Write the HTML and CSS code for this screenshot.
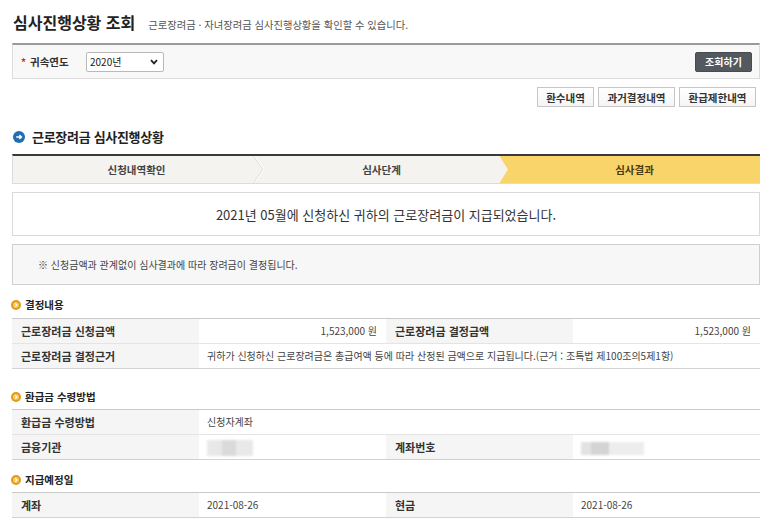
FILE: index.html
```html
<!DOCTYPE html>
<html lang="ko">
<head>
<meta charset="utf-8">
<title>심사진행상황 조회</title>
<link rel="stylesheet" href="styles.css">
</head>
<body>
<div class="page">
  <div class="page-head">
    <h1 class="page-title">심사진행상황 조회</h1>
    <p class="page-desc">근로장려금 · 자녀장려금 심사진행상황을 확인할 수 있습니다.</p>
  </div>

  <div class="search-box">
    <div class="search-field">
      <span class="req">*</span>
      <span class="search-label">귀속연도</span>
      <div class="select">
        <span>2020년</span>
        <svg class="select-arrow" width="8" height="6" viewBox="0 0 8 6"><path d="M1 1.2 L4 4.4 L7 1.2" fill="none" stroke="#222" stroke-width="1.8"/></svg>
      </div>
    </div>
    <button class="btn-dark">조회하기</button>
  </div>

  <div class="btn-row">
    <button class="btn btn-s">환수내역</button>
    <button class="btn btn-l">과거결정내역</button>
    <button class="btn btn-l">환급제한내역</button>
  </div>

  <h2 class="sec-title">
    <svg class="sec-icon" width="12" height="12" viewBox="0 0 12 12"><circle cx="6" cy="6" r="6" fill="#1f6db3"/><path d="M3.2 6 H8.4 M6.4 4 L8.5 6 L6.4 8" fill="none" stroke="#fff" stroke-width="1.4"/></svg>
    근로장려금 심사진행상황
  </h2>

  <div class="steps">
    <div class="step step-1">신청내역확인
      <svg class="chev chev-1" width="11" height="27" viewBox="0 0 11 27"><polyline points="0.5,0 10,13.5 0.5,27" fill="none" stroke="#d9d7d0" stroke-width="1"/><polyline points="1.6,0 11,13.5 1.6,27" fill="none" stroke="#fdfcfa" stroke-width="1.2"/></svg>
    </div>
    <div class="step step-2">심사단계
      <svg class="chev chev-2" width="10" height="27" viewBox="0 0 10 27"><polygon points="0,0 8.5,13.5 0,27" fill="#f4f3ef"/><polyline points="0,0 8.5,13.5 0,27" fill="none" stroke="#f7f2df" stroke-width="1"/></svg>
    </div>
    <div class="step step-3">심사결과</div>
  </div>

  <div class="msg-box">2021년 05월에 신청하신 귀하의 근로장려금이 지급되었습니다.</div>

  <div class="note-box">※ 신청금액과 관계없이 심사결과에 따라 장려금이 결정됩니다.</div>

  <h3 class="sub-title sub-first">
    <svg class="sub-icon" width="10" height="10" viewBox="0 0 10 10"><circle cx="5" cy="5" r="5" fill="#e39a1c"/><circle cx="5" cy="5" r="3" fill="#f6c95a"/><path d="M4.2 3.4 L5.9 5 L4.2 6.6" fill="none" stroke="#fff" stroke-width="1.1"/></svg>
    결정내용
  </h3>
  <table class="info">
    <colgroup><col class="c-th"><col class="c-td"><col class="c-th"><col class="c-td"></colgroup>
    <tr>
      <th>근로장려금 신청금액</th>
      <td class="num">1,523,000 원</td>
      <th>근로장려금 결정금액</th>
      <td class="num">1,523,000 원</td>
    </tr>
    <tr class="last">
      <th>근로장려금 결정근거</th>
      <td colspan="3">귀하가 신청하신 근로장려금은 총급여액 등에 따라 산정된 금액으로 지급됩니다.(근거 : 조특법 제100조의5제1항)</td>
    </tr>
  </table>

  <h3 class="sub-title sub-second">
    <svg class="sub-icon" width="10" height="10" viewBox="0 0 10 10"><circle cx="5" cy="5" r="5" fill="#e39a1c"/><circle cx="5" cy="5" r="3" fill="#f6c95a"/><path d="M4.2 3.4 L5.9 5 L4.2 6.6" fill="none" stroke="#fff" stroke-width="1.1"/></svg>
    환급금 수령방법
  </h3>
  <table class="info">
    <colgroup><col class="c-th"><col class="c-td"><col class="c-th"><col class="c-td"></colgroup>
    <tr>
      <th>환급금 수령방법</th>
      <td colspan="3">신청자계좌</td>
    </tr>
    <tr class="last">
      <th>금융기관</th>
      <td><span class="blur blur-bank"></span></td>
      <th>계좌번호</th>
      <td><span class="blur blur-acct"></span></td>
    </tr>
  </table>

  <h3 class="sub-title sub-third">
    <svg class="sub-icon" width="10" height="10" viewBox="0 0 10 10"><circle cx="5" cy="5" r="5" fill="#e39a1c"/><circle cx="5" cy="5" r="3" fill="#f6c95a"/><path d="M4.2 3.4 L5.9 5 L4.2 6.6" fill="none" stroke="#fff" stroke-width="1.1"/></svg>
    지급예정일
  </h3>
  <table class="info">
    <colgroup><col class="c-th"><col class="c-td"><col class="c-th"><col class="c-td"></colgroup>
    <tr class="last">
      <th>계좌</th>
      <td>2021-08-26</td>
      <th>현금</th>
      <td>2021-08-26</td>
    </tr>
  </table>
</div>
</body>
</html>
```

FILE: styles.css
```css
* { box-sizing: border-box; }
html, body { margin: 0; padding: 0; background: #fff; }
body {
  font-family: "Noto Sans CJK KR", "Noto Sans", sans-serif;
  color: #333;
  font-size: 10px;
}
h1, h2, h3, p { margin: 0; }
button { font-family: inherit; cursor: pointer; }

.page {
  width: 748px;
  margin-left: 12px;
  padding-top: 12px;
}

/* header */
.page-head {
  display: flex;
  align-items: baseline;
  gap: 13px;
  height: 20px;
  line-height: 20px;
}
.page-title {
  font-size: 16px;
  font-weight: bold;
  color: #222;
  padding-left: 1px;
}
.page-desc {
  font-size: 10.3px;
  color: #555;
}

/* search box */
.search-box {
  margin-top: 11px;
  height: 36px;
  background: #f8f8f8;
  border: 1px solid #dcdcdc;
  border-top: 2px solid #9a9a9a;
  display: flex;
  align-items: center;
  justify-content: space-between;
  padding: 0 7px 0 8px;
}
.search-field {
  display: flex;
  align-items: center;
}
.req {
  color: #c0392b;
  font-weight: bold;
  font-size: 10px;
  width: 9px;
}
.search-label {
  font-size: 10.5px;
  font-weight: bold;
  color: #333;
  width: 56px;
}
.select {
  width: 78px;
  height: 20px;
  background: #fff;
  border: 1px solid #b9b9b9;
  border-radius: 2px;
  display: flex;
  align-items: center;
  justify-content: space-between;
  padding: 0 5px 0 3px;
  font-size: 10px;
  color: #222;
}
.btn-dark {
  width: 57px;
  height: 20px;
  background: #53595e;
  color: #fff;
  border: 1px solid #474c50;
  border-radius: 2px;
  font-size: 10px;
  font-weight: bold;
  padding: 0;
}

/* buttons row */
.btn-row {
  margin-top: 8px;
  display: flex;
  justify-content: flex-end;
  gap: 4px;
  padding-right: 4px;
}
.btn {
  height: 20px;
  padding: 0;
  background: linear-gradient(#ffffff, #f5f5f5);
  border: 1px solid #c6c6c6;
  font-size: 10.5px;
  font-weight: bold;
  color: #333;
}
.btn-s { width: 57px; }
.btn-l { width: 77px; }

/* section title */
.sec-title {
  margin-top: 22px;
  height: 16px;
  line-height: 16px;
  font-size: 13px;
  font-weight: bold;
  color: #222;
  display: flex;
  align-items: center;
  gap: 7px;
  letter-spacing: -0.3px;
}
.sec-icon { margin-left: 1px; flex: none; }

/* steps */
.steps {
  margin-top: 9px;
  height: 30px;
  display: flex;
  background: #f4f3ef;
  border-top: 2px solid #3a3a3a;
  border-bottom: 1px solid #dcdcdc;
  border-left: 1px solid #dcdcdc;
}
.step {
  position: relative;
  display: flex;
  align-items: center;
  justify-content: center;
  font-size: 10.5px;
  font-weight: bold;
  color: #444;
}
.step-1 { width: 247px; }
.step-2 { width: 240px; padding-left: 3px; }
.step-3 {
  width: 260px;
  padding-left: 9px;
  background: #f9d46b;
  color: #4a3d10;
}
.chev { position: absolute; top: 0; z-index: 1; }
.chev-1 { right: -4px; }
.chev-2 { right: -9px; }

/* message boxes */
.msg-box {
  margin-top: 8px;
  height: 44px;
  border: 1px solid #d9d9d9;
  display: flex;
  align-items: center;
  justify-content: center;
  font-size: 13px;
  color: #333;
}
.note-box {
  margin-top: 8px;
  height: 41px;
  border: 1px solid #cfcfcf;
  background: #f7f7f7;
  padding-left: 25px;
  display: flex;
  align-items: center;
  font-size: 10px;
  color: #444;
}

/* sub titles */
.sub-title {
  height: 14px;
  line-height: 14px;
  font-size: 10.5px;
  font-weight: bold;
  color: #222;
  display: flex;
  align-items: center;
  gap: 4px;
  margin-bottom: 5px;
}
.sub-icon { margin-left: -1px; flex: none; }
.sub-first { margin-top: 13px; margin-bottom: 6px; }
.sub-second { margin-top: 21px; }
.sub-third { margin-top: 13px; }

/* tables */
.info {
  width: 100%;
  table-layout: fixed;
  border-collapse: separate;
  border-spacing: 0;
  border-top: 1px solid #cacaca;
}
.c-th, .c-td { width: 187px; }
.info th, .info td {
  line-height: 24px;
  padding: 0;
  border-bottom: 1px solid #e4e4e4;
  vertical-align: middle;
}
.info .last th, .info .last td { border-bottom-color: #d2d2d2; }
.info th {
  background: #f5f5f5;
  text-align: left;
  padding-left: 9px;
  font-size: 11px;
  font-weight: bold;
  color: #333;
}
.info td {
  padding: 0 8px;
  font-size: 10px;
  color: #444;
}
.info td.num { text-align: right; padding-right: 9px; }

.blur {
  display: inline-block;
  height: 16px;
  vertical-align: middle;
  filter: blur(0.8px);
}
.blur-bank {
  width: 46px;
  background: linear-gradient(90deg, #e8e8e8 0 32%, #dadada 32% 62%, #e9e9e9 62% 100%);
}
.blur-acct {
  width: 63px;
  height: 13px;
  background: linear-gradient(90deg, #e2e2e2 0 16%, #d4d4d4 16% 44%, #ededed 44% 100%);
}
```
